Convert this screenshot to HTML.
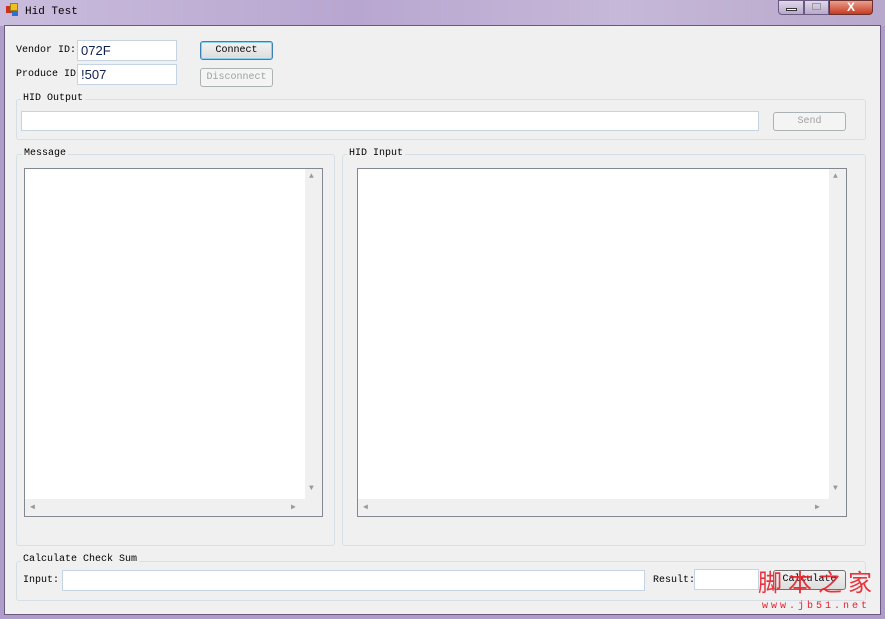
<!DOCTYPE html><html><head><style>
*{margin:0;padding:0;box-sizing:border-box}
body{width:885px;height:619px;overflow:hidden;background:#b09cc8;font-family:"Liberation Mono","WenQuanYi Zen Hei",monospace;font-size:10px;color:#000;position:relative}
.a{position:absolute}
.tb{background:#fff;border:1px solid #c5d3e2}
.btn{border:1px solid #707070;border-radius:3px;background:linear-gradient(#f2f2f2,#dddddd);text-align:center;line-height:17px}
.dis{border-color:#adb2b5;color:#a0a0a0;background:#f4f4f4}
.grp{border:1px solid #d5dfe5;border-radius:3px}
.gl{background:#f0f0f0;padding:0 2px}
.lb{background:#fff;border:1px solid #828790}
.vs{background:#f0f0f0;width:17px}
</style></head><body>
<div class="a" style="left:0;top:0;width:885px;height:26px;background:linear-gradient(90deg,#c9bcdc,#b8a6d0 40%,#c6b8d8 70%,#b8a8cc)"></div>
<div class="a" style="left:6px;top:6px;width:7px;height:7px;background:#d03020"></div>
<div class="a" style="left:10px;top:3px;width:8px;height:8px;background:#f0c020;border:1px solid #a08010"></div>
<div class="a" style="left:12px;top:11px;width:6px;height:5px;background:#3070d0"></div>
<div class="a" style="left:25px;top:6px;font-size:11px">Hid Test</div>
<div class="a" style="left:778px;top:0;width:26px;height:15px;border:1px solid #6a5a80;border-radius:0 0 0 4px;background:linear-gradient(#e0d8ea,#b8a8cc)"></div>
<div class="a" style="left:786px;top:8px;width:11px;height:3px;background:#fff;border:1px solid #333"></div>
<div class="a" style="left:804px;top:0;width:25px;height:15px;border:1px solid #6a5a80;background:linear-gradient(#e0d8ea,#b8a8cc)"></div>
<div class="a" style="left:812px;top:3px;width:9px;height:7px;border:1px solid #999"></div>
<div class="a" style="left:829px;top:0;width:44px;height:15px;border:1px solid #6a3030;border-radius:0 0 4px 0;background:linear-gradient(#e8a090,#c83a20);color:#fff;text-align:center;font-weight:bold;font-size:12px;line-height:13px;font-family:'Liberation Sans',sans-serif">X</div>
<div class="a" style="left:4px;top:25px;width:877px;height:590px;background:#f0f0f0;border:1px solid #6a5a80"></div>
<div class="a" style="left:16px;top:45px">Vendor ID:</div>
<div class="a" style="left:16px;top:69px">Produce ID:</div>
<div class="a tb" style="left:77px;top:40px;width:100px;height:21px;font:13px 'Liberation Sans',sans-serif;padding:2px 3px;color:#102050">072F</div>
<div class="a tb" style="left:77px;top:64px;width:100px;height:21px;font:13px 'Liberation Sans',sans-serif;padding:2px 3px;color:#102050">!507</div>
<div class="a btn" style="left:200px;top:41px;width:73px;height:19px;border-color:#3c7fb1;box-shadow:inset 0 0 0 1px #8ed0f0">Connect</div>
<div class="a btn dis" style="left:200px;top:68px;width:73px;height:19px">Disconnect</div>
<div class="a grp" style="left:16px;top:99px;width:850px;height:41px"></div>
<div class="a gl" style="left:21px;top:93px">HID Output</div>
<div class="a tb" style="left:21px;top:111px;width:738px;height:20px"></div>
<div class="a btn dis" style="left:773px;top:112px;width:73px;height:19px">Send</div>
<div class="a grp" style="left:16px;top:154px;width:319px;height:392px"></div>
<div class="a gl" style="left:22px;top:148px">Message</div>
<div class="a lb" style="left:24px;top:168px;width:299px;height:349px"></div>
<div class="a vs" style="left:305px;top:169px;height:330px"></div>
<div class="a" style="left:25px;top:499px;width:297px;height:17px;background:#f0f0f0"></div>
<div class="a" style="left:309px;top:172px;color:#999;font-size:8px">▲</div>
<div class="a" style="left:309px;top:484px;color:#999;font-size:8px">▼</div>
<div class="a" style="left:30px;top:502px;color:#999;font-size:8px">◀</div>
<div class="a" style="left:291px;top:502px;color:#999;font-size:8px">▶</div>
<div class="a grp" style="left:342px;top:154px;width:524px;height:392px"></div>
<div class="a gl" style="left:347px;top:148px">HID Input</div>
<div class="a lb" style="left:357px;top:168px;width:490px;height:349px"></div>
<div class="a vs" style="left:829px;top:169px;height:330px"></div>
<div class="a" style="left:358px;top:499px;width:488px;height:17px;background:#f0f0f0"></div>
<div class="a" style="left:833px;top:172px;color:#999;font-size:8px">▲</div>
<div class="a" style="left:833px;top:484px;color:#999;font-size:8px">▼</div>
<div class="a" style="left:363px;top:502px;color:#999;font-size:8px">◀</div>
<div class="a" style="left:815px;top:502px;color:#999;font-size:8px">▶</div>
<div class="a grp" style="left:16px;top:561px;width:850px;height:40px"></div>
<div class="a gl" style="left:21px;top:554px">Calculate Check Sum</div>
<div class="a" style="left:23px;top:575px">Input:</div>
<div class="a tb" style="left:62px;top:570px;width:583px;height:21px"></div>
<div class="a" style="left:653px;top:575px">Result:</div>
<div class="a tb" style="left:694px;top:569px;width:65px;height:21px"></div>
<div class="a btn" style="left:773px;top:570px;width:73px;height:20px">Calculate</div>
<div class="a" style="left:758px;top:571px;color:#e8202a;font:24px 'WenQuanYi Zen Hei',sans-serif;letter-spacing:6px;opacity:.9;line-height:26px">脚本之家</div>
<div class="a" style="left:762px;top:601px;color:#e8202a;font-size:10px;letter-spacing:3px;line-height:12px">www.jb51.net</div>
</body></html>
